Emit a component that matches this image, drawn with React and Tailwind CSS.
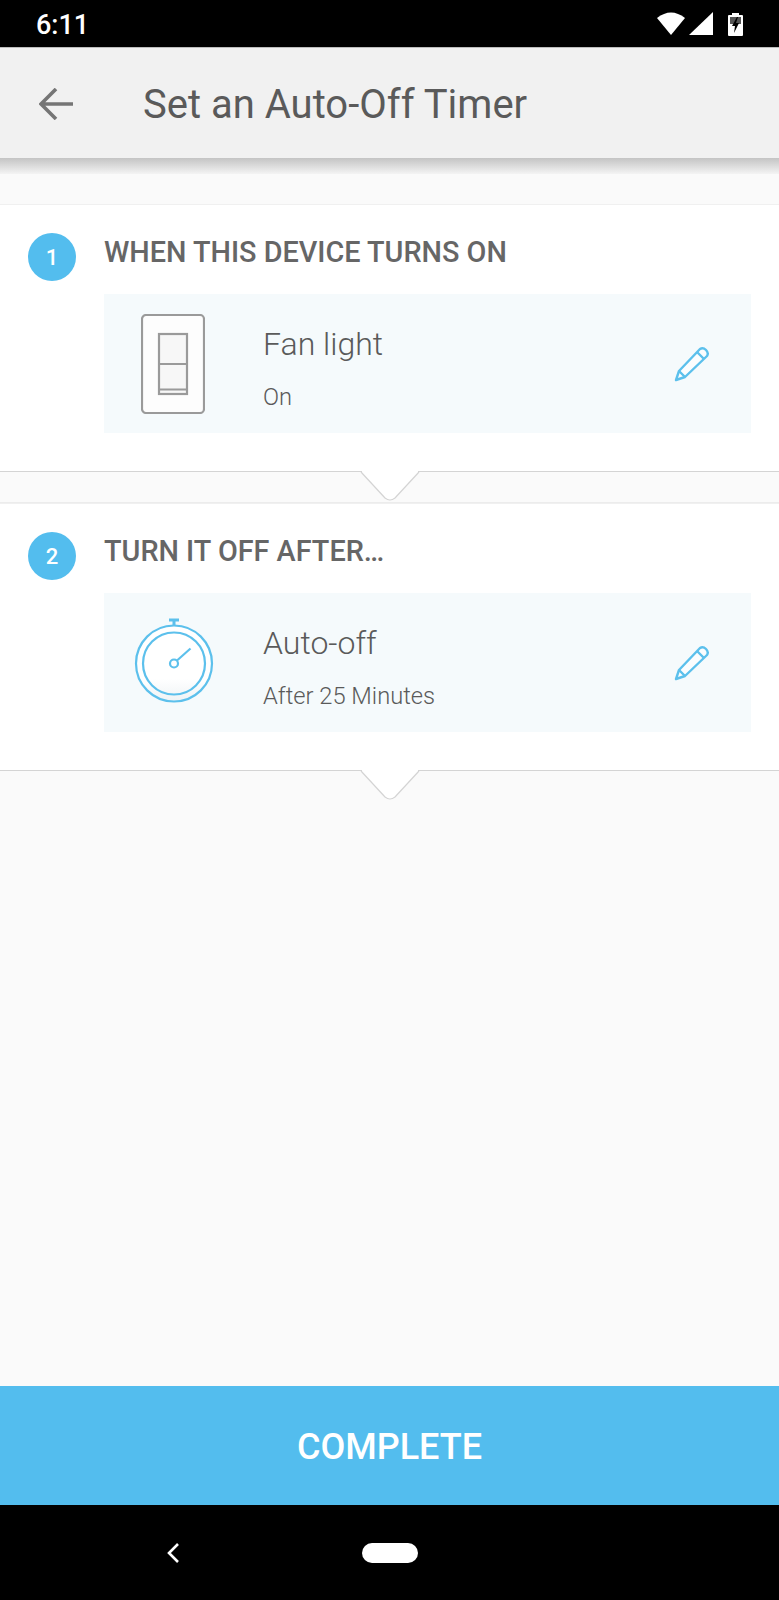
import React from 'react';

const StatusBar = () => (
    <div className="h-[47px] bg-black flex items-center justify-between pl-[36px] pr-[36px] shrink-0">
        <span className="text-white text-[27px] font-medium leading-none mt-[4px]">6:11</span>
        <svg width="86" height="26" viewBox="0 0 86 26" className="mt-[-1px]">
            <path d="M0 8 Q14 -3 28 8 L14 25Z" fill="#fff" />
            <path d="M32 25 H56 V2Z" fill="#fff" />
            <path d="M75 3 H82 V5 H85 a1 1 0 0 1 1 1 V25 a1 1 0 0 1 -1 1 H72 a1 1 0 0 1 -1 -1 V6 a1 1 0 0 1 1 -1 H75Z" fill="#fff" />
            <path d="M73 7 H84 V14 H73Z" fill="#555" />
            <path d="M80 7 L75 16 H78 L77 23 L82 13 H79 L81 7Z" fill="#000" />
        </svg>
    </div>
);

const Header = () => (
    <div className="shrink-0">
        <div className="h-[111px] bg-[#f1f1f1] flex items-center border-t border-[#bdbdbd]">
            <svg className="ml-[39px] shrink-0 mt-[2px]" width="34" height="32" viewBox="0 0 34 32" fill="none" stroke="#757575" strokeWidth="3.6">
                <path d="M34 16 H3 M17 1 L2 16 L17 31" />
            </svg>
            <h1 className="ml-[70px] text-[40px] text-[#5a5a5a] leading-none font-normal mt-[4px]">Set an Auto-Off Timer</h1>
        </div>
        <div className="h-[16px] bg-gradient-to-b from-[#c4c4c4] to-[#f4f4f4]" />
    </div>
);

const SwitchIcon = () => (
    <svg width="64" height="100" viewBox="0 0 64 100" fill="none" stroke="#9a9a9a" strokeWidth="2.2" className="ml-[8px]">
        <rect x="1" y="1" width="62" height="98" rx="4" fill="#fdfdfd" />
        <rect x="18" y="20" width="28" height="60" fill="#f7f7f7" />
        <path d="M18 50 H46 M18 75.5 H46" />
    </svg>
);

const TimerIcon = () => (
    <svg width="80" height="90" viewBox="0 0 80 90" fill="none" stroke="#5cc0ec" strokeWidth="2.2" className="ml-[9px]">
        <defs>
            <linearGradient id="timerFill" x1="0" y1="0" x2="0" y2="1">
                <stop offset="0.7" stopColor="#ffffff" />
                <stop offset="1" stopColor="#eef3f5" />
            </linearGradient>
        </defs>
        <circle cx="40" cy="45.5" r="38" fill="url(#timerFill)" />
        <circle cx="40" cy="45.5" r="31" />
        <circle cx="40" cy="45.5" r="4" />
        <path d="M43 42.5 L56.5 30.5" />
        <path d="M40 7.5 V2 M35 2 H45" strokeWidth="3" />
    </svg>
);

const PencilIcon = () => (
    <svg width="36" height="36" viewBox="0 0 36 36" fill="none" stroke="#5cc0ec" strokeWidth="2.4" strokeLinejoin="round">
        <path d="M26 3 Q29 1 32 4 Q35 7 33 10 L11 31 L2 34 L5 25Z" fill="#fbfdfe" />
        <path d="M5 25 L11 31 M23 6 L30 13" />
    </svg>
);

const Step = ({ number, title, icon, name, detail }) => (
    <div className="h-[268px] bg-white relative border-b border-[#d4d4d4] border-t-[#f0f0f0] border-t pl-[28px] pr-[28px] pt-[28px] shrink-0">
        <div className="flex">
            <div className="w-[48px] h-[48px] rounded-full bg-[#53bdee] text-white text-[22px] font-medium flex items-center justify-center shrink-0">
                {number}
            </div>
            <div className="ml-[28px] flex-1">
                <h2 className="text-[28.8px] font-medium text-[#666666] leading-none mt-[5px] h-[31px]">{title}</h2>
                <div className="mt-[25px] h-[139px] bg-[#f5fafc] flex items-center">
                    <div className="w-[130px] flex justify-center shrink-0">{icon}</div>
                    <div className="ml-[29px] flex-1">
                        <div className="text-[32px] font-light text-[#5a5a5a] leading-none mt-[10px]">{name}</div>
                        <div className="mt-[26px] text-[23.7px] font-light text-[#5a5a5a] leading-none">{detail}</div>
                    </div>
                    <div className="mr-[41px]"><PencilIcon /></div>
                </div>
            </div>
        </div>
        <svg className="absolute left-[360px] top-[265px]" width="60" height="32" viewBox="0 0 60 32" fill="#fff" stroke="#d4d4d4" strokeWidth="1.2">
            <path d="M1 2 L25 28 Q30 32 35 28 L59 2" />
            <path d="M2 0 H58 V2 H2Z" stroke="none" />
        </svg>
    </div>
);

export default function App() {
    return (
        <div className="h-[1600px] w-[779px] flex flex-col bg-[#fafafa] overflow-hidden font-['Roboto',sans-serif]">
            <StatusBar />
            <Header />
            <div className="flex-1 flex flex-col pt-[30px]">
                <Step number="1" title="WHEN THIS DEVICE TURNS ON" icon={<SwitchIcon />} name="Fan light" detail="On" />
                <div className="h-[31px] shrink-0 border-b border-[#ececec]" />
                <Step number="2" title="TURN IT OFF AFTER…" icon={<TimerIcon />} name="Auto-off" detail="After 25 Minutes" />
            </div>
            <button className="h-[119px] shrink-0 bg-[#53bdee] text-white text-[36px] font-medium pt-[2px]">COMPLETE</button>
            <div className="h-[95px] shrink-0 bg-black flex items-center justify-center relative">
                <svg className="absolute left-[165px] top-[37px]" width="16" height="22" viewBox="0 0 16 22" fill="none" stroke="#fff" strokeWidth="2.6">
                    <path d="M13 2 L4 11 L13 20" />
                </svg>
                <div className="w-[56px] h-[20px] rounded-full bg-white" />
            </div>
        </div>
    );
}
